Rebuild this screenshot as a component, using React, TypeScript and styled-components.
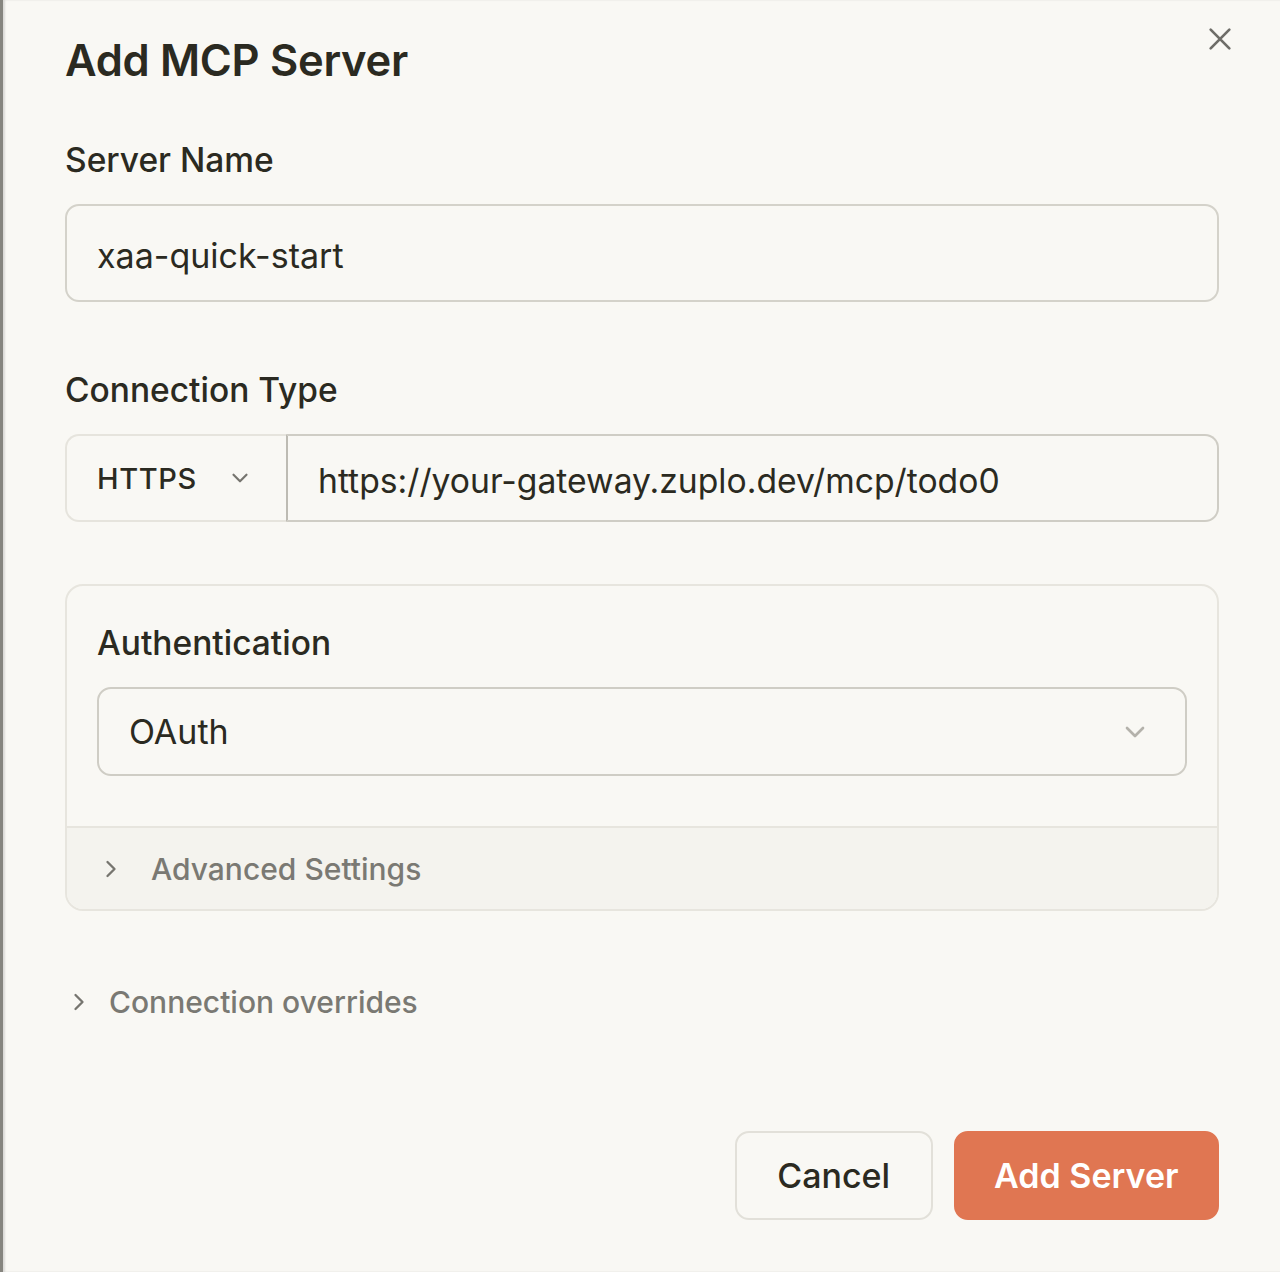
import React from "react";
import styled, { createGlobalStyle } from "styled-components";

const Global = createGlobalStyle`
  html, body { margin: 0; padding: 0; background: #f9f8f4; }
  body { font-family: Inter, "Noto Sans", sans-serif; color: #2b2a21; }
  * { box-sizing: border-box; }
`;

const Dialog = styled.div`
  position: relative;
  width: 1280px;
  height: 1272px;
  background: #f9f8f4;
  border-left: 3px solid #86857f;
  box-shadow: inset 2px 0 2px rgba(0,0,0,0.12);
  padding: 32px 61px 0 62px;
  display: flex;
  flex-direction: column;
`;

const Title = styled.h1`
  margin: 0;
  font-size: 43.5px;
  font-weight: 600;
  line-height: 56px;
  letter-spacing: -0.3px;
  color: #2b2a21;
`;

const CloseButton = styled.button`
  position: absolute;
  top: 22px;
  right: 43px;
  width: 34px;
  height: 34px;
  padding: 0;
  border: none;
  background: transparent;
  display: flex;
  align-items: center;
  justify-content: center;
  color: #6e6d68;
`;

const Field = styled.div<{ $mt: number }>`
  margin-top: ${(p) => p.$mt}px;
  display: flex;
  flex-direction: column;
`;

const Label = styled.div`
  font-size: 33.5px;
  font-weight: 500;
  line-height: 40px;
  color: #2b2a21;
  margin-bottom: 24px;
`;

const TextInput = styled.div`
  height: 98px;
  border: 2px solid #d4d2ca;
  border-radius: 14px;
  padding: 4px 30px 0;
  display: flex;
  align-items: center;
  font-size: 34px;
  color: #2b2a21;
`;

const Row = styled.div`
  display: flex;
  height: 88px;
`;

const Prefix = styled.div`
  width: 221px;
  border: 2px solid #e6e4dd;
  border-right: none;
  border-radius: 14px 0 0 14px;
  display: flex;
  align-items: center;
  padding: 0 30px;
  gap: 30px;
  font-size: 29px;
  font-weight: 500;
  letter-spacing: 0.6px;
  color: #2b2a21;
`;

const UrlInput = styled.div`
  flex: 1;
  border: 2px solid #cfcdc5;
  border-left: 2px solid #bdbbb3;
  border-radius: 0 14px 14px 0;
  display: flex;
  align-items: center;
  padding: 4px 30px 0;
  font-size: 33.7px;
  color: #2b2a21;
`;

const Card = styled.div`
  margin-top: 62px;
  border: 2px solid #e7e5de;
  border-radius: 18px;
  overflow: hidden;
  display: flex;
  flex-direction: column;
`;

const CardBody = styled.div`
  padding: 37px 30px 50px 30px;
  display: flex;
  flex-direction: column;
`;

const Select = styled.div`
  height: 89px;
  border: 2px solid #cfcdc5;
  border-radius: 14px;
  display: flex;
  align-items: center;
  justify-content: space-between;
  padding: 0 34px 0 30px;
  font-size: 34px;
  color: #2b2a21;
`;

const CardFooter = styled.div`
  border-top: 2px solid #e7e5de;
  background: #f4f3ee;
  height: 83px;
  display: flex;
  align-items: center;
  padding: 0 30px;
  gap: 26px;
  font-size: 30px;
  font-weight: 500;
  color: #7a7973;
`;

const Disclosure = styled.div`
  margin-top: 71px;
  display: flex;
  align-items: center;
  gap: 16px;
  font-size: 30px;
  font-weight: 500;
  color: #7a7973;
  height: 40px;
`;

const Actions = styled.div`
  margin-top: auto;
  margin-bottom: 52px;
  display: flex;
  justify-content: flex-end;
  gap: 21px;
`;

const Button = styled.button<{ $primary?: boolean }>`
  height: 89px;
  padding: 0 ${(p) => (p.$primary ? 38.5 : 40.5)}px;
  border-radius: 14px;
  font-family: Inter, "Noto Sans", sans-serif;
  font-size: 34px;
  font-weight: ${(p) => (p.$primary ? 600 : 500)};
  border: 2px solid ${(p) => (p.$primary ? "#e07652" : "#e2e0d9")};
  background: ${(p) => (p.$primary ? "#e07652" : "#f9f8f4")};
  color: ${(p) => (p.$primary ? "#ffffff" : "#2b2a21")};
`;

const Chevron = ({ dir, color, size }: { dir: "down" | "right"; color: string; size: number }) => (
  <svg width={size} height={size} viewBox="0 0 24 24" fill="none" stroke={color} strokeWidth={2} strokeLinecap="round" strokeLinejoin="round">
    {dir === "down" ? <path d="M6 9l6 6 6-6" /> : <path d="M9 6l6 6-6 6" />}
  </svg>
);

export default function App() {
  return (
    <>
      <Global />
      <Dialog>
        <CloseButton aria-label="Close">
          <svg width="32" height="32" viewBox="0 0 24 24" fill="none" stroke="currentColor" strokeWidth={2} strokeLinecap="round">
            <path d="M5 5l14 14M19 5L5 19" />
          </svg>
        </CloseButton>
        <Title>Add MCP Server</Title>
        <Field $mt={52}>
          <Label>Server Name</Label>
          <TextInput>xaa-quick-start</TextInput>
        </Field>
        <Field $mt={68}>
          <Label>Connection Type</Label>
          <Row>
            <Prefix>
              HTTPS
              <Chevron dir="down" color="#76756f" size={26} />
            </Prefix>
            <UrlInput>https://your-gateway.zuplo.dev/mcp/todo0</UrlInput>
          </Row>
        </Field>
        <Card>
          <CardBody>
            <Label>Authentication</Label>
            <Select>
              OAuth
              <Chevron dir="down" color="#b4b2ab" size={32} />
            </Select>
          </CardBody>
          <CardFooter>
            <Chevron dir="right" color="#76756f" size={28} />
            Advanced Settings
          </CardFooter>
        </Card>
        <Disclosure>
          <Chevron dir="right" color="#76756f" size={28} />
          Connection overrides
        </Disclosure>
        <Actions>
          <Button>Cancel</Button>
          <Button $primary>Add Server</Button>
        </Actions>
      </Dialog>
    </>
  );
}
